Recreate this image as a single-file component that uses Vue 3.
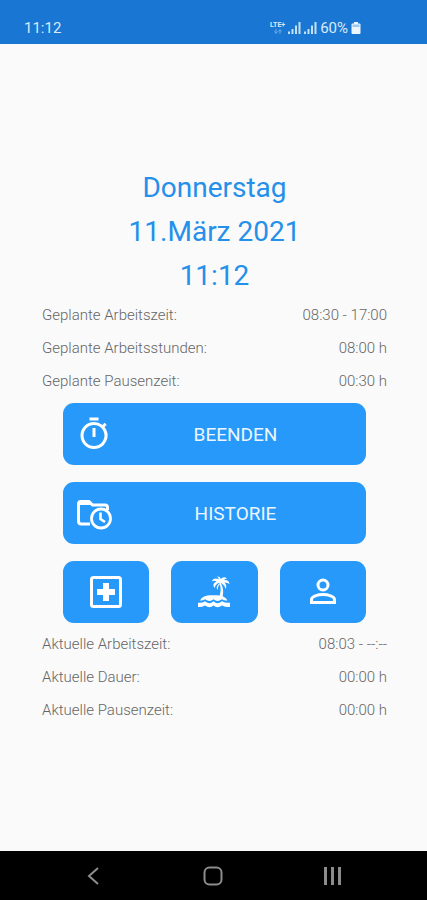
<script setup>
const planned = [
  { label: 'Geplante Arbeitszeit:', value: '08:30 - 17:00' },
  { label: 'Geplante Arbeitsstunden:', value: '08:00 h' },
  { label: 'Geplante Pausenzeit:', value: '00:30 h' },
]
const current = [
  { label: 'Aktuelle Arbeitszeit:', value: '08:03 - --:--' },
  { label: 'Aktuelle Dauer:', value: '00:00 h' },
  { label: 'Aktuelle Pausenzeit:', value: '00:00 h' },
]
</script>

<template>
  <div class="screen">
    <header class="status">
      <span class="clock">11:12</span>
      <div class="indicators">
        <div class="network">
          <span class="lte">LTE+</span>
          <svg width="8" height="5" viewBox="0 0 8 5" aria-hidden="true">
            <path d="M2 0v4M0.5 2.5 2 4.5 3.5 2.5M6 5V1M4.5 2.5 6 .5 7.5 2.5" fill="none" stroke="#6fabe6" stroke-width="1" />
          </svg>
        </div>
        <svg v-for="n in 2" :key="n" width="13" height="12" viewBox="0 0 13 12" fill="#c4dff6" aria-hidden="true">
          <path d="M0 9.500h2V12H0zM3.500 7h2v5h-2zM7 3.500h2V12H7zM10.500 0h2v12h-2z" />
        </svg>
        <span class="percent">60%</span>
        <svg class="battery" width="10" height="12" viewBox="0 0 10 12" fill="#eef6fd" aria-hidden="true">
          <path d="M3 0h4v1.500h1.500q1 0 1 1V11q0 1-1 1h-7q-1 0-1-1V2.500q0-1 1-1H3z" />
          <path d="M1.500 2.500h7v2.500h-7z" fill="#9cc8f1" />
        </svg>
      </div>
    </header>

    <main class="content">
      <h1 class="date">
        <span>Donnerstag</span>
        <span>11.März 2021</span>
        <span>11:12</span>
      </h1>

      <dl class="times">
        <div v-for="row in planned" :key="row.label" class="row">
          <dt>{{ row.label }}</dt>
          <dd>{{ row.value }}</dd>
        </div>
      </dl>

      <div class="actions">
        <button type="button" class="btn wide">
          <svg width="36" height="36" viewBox="0 0 24 24" fill="#fff" aria-hidden="true">
            <path d="M15 1H9v2h6V1zm-4 13h2V8h-2v6zm8.030-6.610 1.420-1.420c-.43-.51-.9-.99-1.410-1.410l-1.420 1.420A8.962 8.962 0 0 0 12 4c-4.970 0-9 4.030-9 9s4.020 9 9 9a8.994 8.994 0 0 0 7.030-14.610zM12 20c-3.870 0-7-3.130-7-7s3.130-7 7-7 7 3.130 7 7-3.130 7-7 7z" />
          </svg>
          <span>BEENDEN</span>
        </button>
        <button type="button" class="btn wide">
          <svg width="36" height="36" viewBox="0 0 36 36" fill="none" stroke="#fff" aria-hidden="true">
            <path d="M14 29H5.500Q2.500 29 2.500 26V9Q2.500 6.500 5 6.500H13L16.500 10H29Q31.500 10 31.500 12.500V15" stroke-width="3" />
            <path d="M3 6h10.500l4 4H3z" fill="#fff" stroke="none" />
            <circle cx="25" cy="23.500" r="9.500" stroke-width="2.800" />
            <path d="M24.500 17.500V24L29 27" stroke-width="2.500" />
          </svg>
          <span>HISTORIE</span>
        </button>
        <div class="trio">
          <button type="button" class="btn" aria-label="Krank">
            <svg width="34" height="34" viewBox="0 0 34 34" aria-hidden="true">
              <rect x="2.500" y="2.500" width="29" height="29" rx="2" fill="none" stroke="#fff" stroke-width="3" />
              <path d="M14 8h6v6h6v6h-6v6h-6v-6H8v-6h6z" fill="#fff" />
            </svg>
          </button>
          <button type="button" class="btn" aria-label="Urlaub">
            <svg width="34" height="34" viewBox="0 0 34 34" fill="#fff" aria-hidden="true">
              <path d="M23.500 7.500Q27.500 14 25.500 22.500L22.300 21.500Q24.800 15 22.600 8.500z" />
              <path d="M23 8Q19.500 7.500 17.500 13Q14.500 8.500 19.500 6.500Q17 5 14.500 6.500Q16.500 2 21.800 4.300Q21.500 2.300 19.800 1.500Q23.300 1 23.800 4Q26.500 .8 30 3.500Q27.800 3.500 27 5Q32 4.500 32.500 9Q30 7.200 27.500 7.500Q30.500 10.500 28.500 14Q27.500 10 24.500 8.200Q21 9.500 20.500 15Q18 11.500 23 8z" />
              <path d="M3 25.500Q5.500 20.500 12.500 20.300H20Q28 20.500 30.500 25.500Q27.500 26 25 24.200Q22.500 26 20.500 26T16.500 24.200Q14.500 26 12.500 26T8 24.200Q5.500 26 3 25.500z" />
              <path d="M1 27.700Q5 28.300 8 26.300Q10.500 28.200 12.500 28.200T16.500 26.300Q18.500 28.200 20.500 28.200T25 26.300Q28.500 28.300 33 27.700V32Q28.500 32.300 25 30.500Q22.500 32.200 20.500 32.200T16.500 30.500Q14.500 32.200 12.500 32.200T8 30.500Q5 32.300 1 32z" />
            </svg>
          </button>
          <button type="button" class="btn" aria-label="Profil">
            <svg width="34" height="34" viewBox="0 0 34 34" fill="none" stroke="#fff" stroke-width="3" aria-hidden="true">
              <circle cx="17" cy="10" r="5" />
              <path d="M5.500 27.500V24.500C5.500 21.300 12 19.500 17 19.500S28.500 21.300 28.500 24.500V27.500z" />
            </svg>
          </button>
        </div>
      </div>

      <dl class="times">
        <div v-for="row in current" :key="row.label" class="row">
          <dt>{{ row.label }}</dt>
          <dd>{{ row.value }}</dd>
        </div>
      </dl>
    </main>

    <nav class="system">
      <button type="button" aria-label="Zurück">
        <svg width="20" height="20" viewBox="0 0 20 20"><path d="M14 2 5 10l9 8" /></svg>
      </button>
      <button type="button" aria-label="Startbildschirm">
        <svg width="20" height="20" viewBox="0 0 20 20"><rect x="1.500" y="1.500" width="17" height="17" rx="5" /></svg>
      </button>
      <button type="button" aria-label="Letzte Apps">
        <svg class="bars" width="20" height="20" viewBox="0 0 20 20"><path d="M2.500 1v18M9.500 1v18M16.500 1v18" /></svg>
      </button>
    </nav>
  </div>
</template>

<style>
body {
  background: #fafafa;
}
</style>

<style scoped>
.screen {
  display: flex;
  flex-direction: column;
  min-height: 100vh;
  font-family: Roboto, "Liberation Sans", sans-serif;
  background: #fafafa;
}

.status {
  display: flex;
  align-items: center;
  justify-content: space-between;
  box-sizing: border-box;
  height: 44px;
  padding: 12px 66px 0 24px;
  background: #1976d2;
  color: #d9eafa;
  font-size: 15px;
  line-height: 20px;
}

.indicators {
  display: flex;
  align-items: center;
  gap: 3px;
}

.network {
  display: flex;
  flex-direction: column;
  align-items: center;
}

.lte {
  font-size: 7px;
  line-height: 7px;
  font-weight: 700;
}

.content {
  display: flex;
  flex: 1;
  flex-direction: column;
  justify-content: center;
  padding: 0 40px 2px 42px;
}

.date {
  display: flex;
  flex-direction: column;
  margin: 0 0 1px;
  color: #2490ea;
  font-size: 28px;
  font-weight: 400;
  line-height: 44px;
  text-align: center;
}

.times {
  margin: 0;
  color: #666;
  font-size: 15px;
  font-weight: 300;
  line-height: 33px;
}

.row {
  display: flex;
  justify-content: space-between;
}

.row dd {
  margin: 0;
}

.actions {
  display: flex;
  flex-direction: column;
  gap: 17px;
  margin: 5px 0;
  padding: 0 21px;
}

.trio {
  display: grid;
  grid-template-columns: repeat(3, 1fr);
  gap: 22px;
}

.btn {
  display: flex;
  align-items: center;
  justify-content: center;
  height: 62px;
  padding: 0;
  border: 0;
  border-radius: 11px;
  background: #2699fb;
  color: #edf6ff;
  font: inherit;
  font-size: 19px;
}

.wide {
  gap: 6px;
  padding: 0 13px;
}

.wide span {
  flex: 1;
}

.system {
  display: flex;
  align-items: center;
  justify-content: space-around;
  height: 49px;
  padding: 0 34px;
  background: #000;
}

.system button {
  display: flex;
  align-items: center;
  justify-content: center;
  width: 48px;
  height: 48px;
  padding: 0;
  border: 0;
  background: none;
}

.system svg {
  fill: none;
  stroke: #8c8c8c;
  stroke-width: 2;
}

.system .bars {
  stroke-width: 3;
}
</style>
